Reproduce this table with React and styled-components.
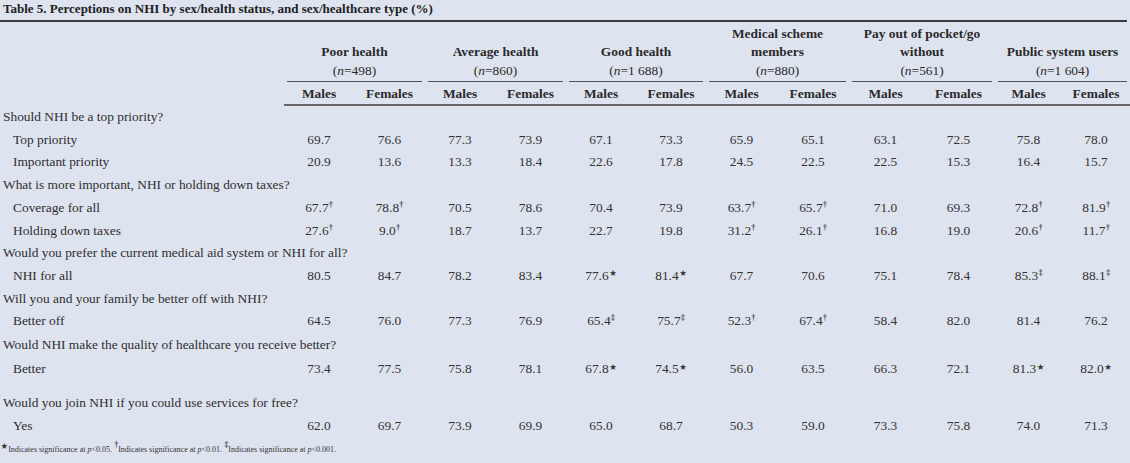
import React from 'react';
import styled, { createGlobalStyle } from 'styled-components';

const GlobalStyle = createGlobalStyle`
  body {
    margin: 0;
    background: #dee3f0;
    font-family: "Liberation Serif", "Times New Roman", serif;
    color: #2e2e2e;
  }
`;

const Page = styled.div`
  width: 1130px;
  height: 463px;
  overflow: hidden;
  background: #dee3f0;
`;

const Title = styled.div`
  font-size: 13px;
  font-weight: 700;
  line-height: 16px;
  color: #222;
  padding: 1px 3px 3px;
  border-bottom: 2px solid #3a3a3a;
  width: 1127px;
  box-sizing: border-box;
`;

const Table = styled.table`
  border-collapse: separate;
  border-spacing: 0;
  table-layout: fixed;
  width: 1130px;
  font-size: 13.4px;
`;

const GroupHead = styled.th`
  height: 60px;
  vertical-align: bottom;
  padding: 0 ${(p) => p.$right || 3}px 0 3px;
  font-weight: 700;
  text-align: center;
`;

const GroupLabel = styled.div`
  line-height: 18.5px;
  border-bottom: 1px solid #555;
  padding-bottom: 1px;
  color: #2a2a2a;

  i {
    font-weight: 400;
  }
`;

const GroupN = styled.span`
  font-weight: 400;
`;

const SubHead = styled.th`
  padding: 2px 0 0;
  line-height: 20px;
  font-weight: 700;
  text-align: center;
  border-bottom: 2px solid #666;
  color: #2a2a2a;
`;

const LabelCell = styled.td`
  padding: 0 0 ${(p) => p.$gap || 0}px ${(p) => (p.$indent ? 13 : 3)}px;
  line-height: ${(p) => p.$h}px;
  vertical-align: top;
  white-space: nowrap;
  overflow: visible;
`;

const Cell = styled.td`
  padding: 0 0 ${(p) => p.$gap || 0}px;
  line-height: ${(p) => p.$h}px;
  vertical-align: top;
  text-align: center;
  color: #333;
`;

const Sup = styled.sup`
  font-size: 7.5px;
  font-weight: 700;
  line-height: 0;
  vertical-align: 5px;
  margin-left: 0.5px;
`;

const Star = styled.span`
  font-family: "DejaVu Sans", sans-serif;
  font-size: 8.5px;
  vertical-align: 3.5px;
  line-height: 0;
  margin-left: 0.5px;
`;

const Footnote = styled.div`
  font-size: 8px;
  line-height: 12px;
  padding: 7px 0 0 0;
  color: #333;

  i {
    font-style: italic;
  }
`;

const groups = [
  { name: ['Poor health'], n: '498' },
  { name: ['Average health'], n: '860' },
  { name: ['Good health'], n: '1 688' },
  { name: ['Medical scheme', 'members'], n: '880' },
  { name: ['Pay out of pocket/go', 'without'], n: '561' },
  { name: ['Public system users'], n: '1 604', right: 3 },
];

const widths = [284, 70, 71, 70, 71, 70, 70, 71, 72, 73, 73, 67, 68];

const rows = [
  { q: 'Should NHI be a top priority?' },
  { label: 'Top priority', v: ['69.7', '76.6', '77.3', '73.9', '67.1', '73.3', '65.9', '65.1', '63.1', '72.5', '75.8', '78.0'] },
  { label: 'Important priority', v: ['20.9', '13.6', '13.3', '18.4', '22.6', '17.8', '24.5', '22.5', '22.5', '15.3', '16.4', '15.7'] },
  { q: 'What is more important, NHI or holding down taxes?' },
  { label: 'Coverage for all', v: ['67.7†', '78.8†', '70.5', '78.6', '70.4', '73.9', '63.7†', '65.7†', '71.0', '69.3', '72.8†', '81.9†'] },
  { label: 'Holding down taxes', v: ['27.6†', '9.0†', '18.7', '13.7', '22.7', '19.8', '31.2†', '26.1†', '16.8', '19.0', '20.6†', '11.7†'] },
  { q: 'Would you prefer the current medical aid system or NHI for all?' },
  { label: 'NHI for all', v: ['80.5', '84.7', '78.2', '83.4', '77.6*', '81.4*', '67.7', '70.6', '75.1', '78.4', '85.3‡', '88.1‡'] },
  { q: 'Will you and your family be better off with NHI?' },
  { label: 'Better off', v: ['64.5', '76.0', '77.3', '76.9', '65.4‡', '75.7‡', '52.3†', '67.4†', '58.4', '82.0', '81.4', '76.2'] },
  { q: 'Would NHI make the quality of healthcare you receive better?', h: 24 },
  { label: 'Better', h: 24, gap: 10, v: ['73.4', '77.5', '75.8', '78.1', '67.8*', '74.5*', '56.0', '63.5', '66.3', '72.1', '81.3*', '82.0*'] },
  { q: 'Would you join NHI if you could use services for free?', h: 23 },
  { label: 'Yes', h: 23, v: ['62.0', '69.7', '73.9', '69.9', '65.0', '68.7', '50.3', '59.0', '73.3', '75.8', '74.0', '71.3'] },
];

function Value({ text }) {
  const mark = text.slice(-1);
  if (mark === '*') {
    return (
      <>
        {text.slice(0, -1)}
        <Star>★</Star>
      </>
    );
  }
  if (mark === '†' || mark === '‡') {
    return (
      <>
        {text.slice(0, -1)}
        <Sup>{mark}</Sup>
      </>
    );
  }
  return text;
}

export default function App() {
  return (
    <Page>
      <GlobalStyle />
      <Title>Table 5. Perceptions on NHI by sex/health status, and sex/healthcare type (%)</Title>
      <Table>
        <colgroup>
          {widths.map((w, i) => (
            <col key={i} style={{ width: w }} />
          ))}
        </colgroup>
        <thead>
          <tr>
            <th rowSpan={2} />
            {groups.map((g) => (
              <GroupHead key={g.n} colSpan={2} $right={g.right}>
                <GroupLabel>
                  {g.name.map((line) => (
                    <div key={line}>{line}</div>
                  ))}
                  <GroupN>
                    (<i>n</i>={g.n})
                  </GroupN>
                </GroupLabel>
              </GroupHead>
            ))}
          </tr>
          <tr>
            {groups.map((g) => (
              <React.Fragment key={g.n}>
                <SubHead>Males</SubHead>
                <SubHead>Females</SubHead>
              </React.Fragment>
            ))}
          </tr>
        </thead>
        <tbody>
          {rows.map((r, i) => {
            const h = r.h || 22.7;
            if (r.q) {
              return (
                <tr key={i}>
                  <LabelCell colSpan={13} $h={h}>
                    {r.q}
                  </LabelCell>
                </tr>
              );
            }
            return (
              <tr key={i}>
                <LabelCell $indent $h={h} $gap={r.gap}>
                  {r.label}
                </LabelCell>
                {r.v.map((val, j) => (
                  <Cell key={j} $h={h} $gap={r.gap}>
                    <Value text={val} />
                  </Cell>
                ))}
              </tr>
            );
          })}
        </tbody>
      </Table>
      <Footnote>
        <Star>★</Star>Indicates significance at <i>p</i>&lt;0.05. <Sup>†</Sup>Indicates significance at{' '}
        <i>p</i>&lt;0.01. <Sup>‡</Sup>Indicates significance at <i>p</i>&lt;0.001.
      </Footnote>
    </Page>
  );
}
